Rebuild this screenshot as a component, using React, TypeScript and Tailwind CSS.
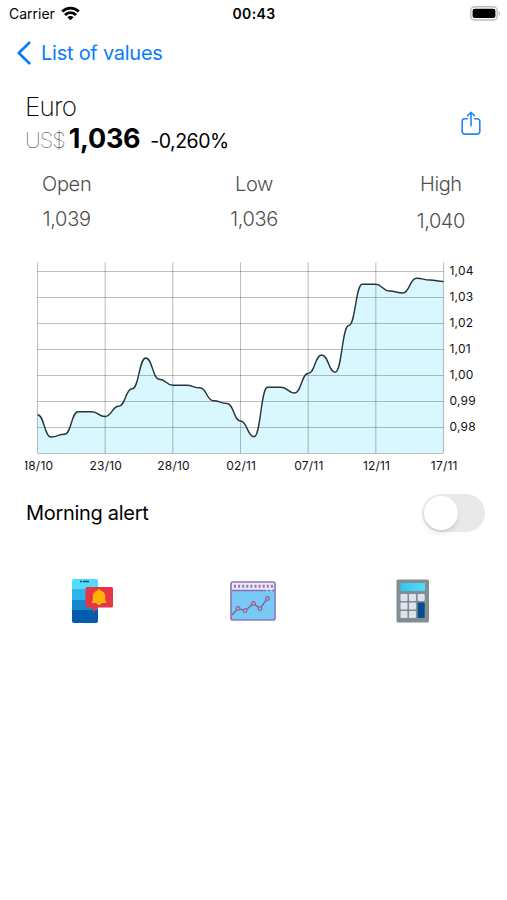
import React, { useState } from "react";

const chartWidth = 460;
const chartHeight = 216;
const plot = { left: 12.5, right: 418.5, top: 4.5, bottom: 195 };

// vertical position of each daily rate, 18/10 to 17/11
const points = [
  156.7, 179, 176.3, 153.7, 153.7, 158.5, 148.3, 130.8, 100, 121.3,
  127.3, 127.3, 129.8, 142.8, 145.5, 163, 178.8, 129.3, 129.3, 135,
  115.5, 97, 114.2, 67.5, 26.3, 26.3, 33, 35, 20.2, 22, 23.5,
];

const rates = ["1,04", "1,03", "1,02", "1,01", "1,00", "0,99", "0,98"];
const dates = ["18/10", "23/10", "28/10", "02/11", "07/11", "12/11", "17/11"];

const statBase = "flex flex-col items-center text-[20px] leading-7 font-light text-[#505050]";

const stats = [
  { label: "Open", value: "1,039", className: `${statBase} gap-[7px] tracking-[-0.3px]` },
  { label: "Low", value: "1,036", className: `${statBase} gap-[7px] tracking-[-0.4px]` },
  { label: "High", value: "1,040", className: `${statBase} gap-[9px] tracking-[-0.4px]` },
];

const step = (plot.right - plot.left) / (points.length - 1);

function buildLine() {
  let d = `M${plot.left} ${points[0]}`;
  for (let i = 1; i < points.length; i++) {
    const x = plot.left + i * step;
    const mid = x - step / 2;
    d += ` C${mid} ${points[i - 1]} ${mid} ${points[i]} ${x} ${points[i]}`;
  }
  return d;
}

function StatusBar() {
  return (
    <div className="grid grid-cols-3 items-center h-[27px] pl-[9px] pr-[6px] text-black">
      <div className="flex items-center gap-[6px]">
        <span className="text-[14px]">Carrier</span>
        <svg width="19" height="15" viewBox="0 0 19 15">
          <g fill="none" stroke="#000" strokeWidth="2.8">
            <path d="M1.2 5.5a11.8 11.8 0 0 1 16.6 0" />
            <path d="M4 8.9a7.8 7.8 0 0 1 11 0" />
          </g>
          <path d="M6.4 11.3a4.4 4.4 0 0 1 6.2 0l-3.1 3z" />
        </svg>
      </div>
      <span className="-ml-[2px] text-center text-[14px] font-semibold tracking-[0.4px]">00:43</span>
      <svg className="justify-self-end" width="31" height="15" viewBox="0 0 31 15">
        <rect x="0.8" y="0.8" width="26.4" height="13.2" rx="3.8" fill="#fff" stroke="#bcbcbc" strokeWidth="1.4" />
        <rect x="2.6" y="2.7" width="22.8" height="9.4" rx="2" />
        <path d="M28.6 5.2c2 .8 2 3.8 0 4.6z" fill="#bcbcbc" />
      </svg>
    </div>
  );
}

function ShareIcon() {
  return (
    <svg width="20" height="25" viewBox="0 0 20 25" fill="none" stroke="#2086f0" strokeWidth="1.6" strokeLinecap="round" strokeLinejoin="round">
      <path d="M6.3 7.7H3.8a2.6 2.6 0 0 0-2.6 2.6v10.2a2.6 2.6 0 0 0 2.6 2.6h12.4a2.6 2.6 0 0 0 2.6-2.6V10.3a2.6 2.6 0 0 0-2.6-2.6h-2.5" />
      <path d="M10 14.8V1.4M6.6 4.7 10 1.3l3.4 3.4" />
    </svg>
  );
}

function RateChart() {
  const line = buildLine();
  return (
    <svg className="overflow-hidden" width={chartWidth} height={chartHeight} viewBox={`0 0 ${chartWidth} ${chartHeight}`}>
      <path d={`${line} V${plot.bottom} H${plot.left} Z`} fill="#d9f7ff" />
      <g stroke="#000" strokeOpacity="0.25" strokeWidth="1.1">
        {rates.map((rate, i) => (
          <path key={rate} d={`M${plot.left} ${13.5 + i * 26}H${plot.right}`} />
        ))}
        {dates.map((date, i) => (
          <path key={date} d={`M${plot.left + i * step * 5} ${plot.top}V${plot.bottom}`} />
        ))}
        <path d={`M${plot.left} ${plot.bottom + 0.5}H${plot.right}`} />
      </g>
      <path d={line} fill="none" stroke="#26363a" strokeWidth="1.4" />
      <g className="tracking-[0.2px]" fill="#111" fontSize="12" fontWeight="400">
        {rates.map((rate, i) => (
          <text key={rate} x="424.5" y={17.3 + i * 26}>{rate}</text>
        ))}
        {dates.map((date, i) => (
          <text key={date} x={plot.left + i * step * 5 + 0.7} y="211.5" textAnchor="middle">{date}</text>
        ))}
      </g>
    </svg>
  );
}

function PhoneAlertIcon() {
  return (
    <svg width="43" height="46" viewBox="0 0 43 46">
      <path d="M3 1h22a2 2 0 0 1 2 2v8H1V3a2 2 0 0 1 2-2z" fill="#50dcfa" />
      <path d="M1 11h26v12H1z" fill="#2bb5ec" />
      <path d="M1 22h26v10H1z" fill="#1688d2" />
      <path d="M1 32h26v11a2 2 0 0 1-2 2H3a2 2 0 0 1-2-2z" fill="#045cac" />
      <path d="M9 3.5h2M12 3.5h6" stroke="#164b78" strokeWidth="1.6" />
      <path d="M16 9h24.5a1.5 1.5 0 0 1 1.5 1.5V28a1.5 1.5 0 0 1-1.5 1.5H27L22 35v-5.5h-6a1.5 1.5 0 0 1-1.5-1.5V10.5A1.5 1.5 0 0 1 16 9z" fill="#e73545" />
      <path d="M28 11c1 0 1.6.8 1.6 1.5 3.4.9 4.6 3 4.6 6V22l1.3 3h-15l1.3-3v-3.5c0-3 1.2-5.1 4.6-6 0-.7.6-1.5 1.6-1.5z" fill="#ffb000" />
      <path d="M25.3 25h5.4a2.7 1.8 0 0 1-5.4 0z" fill="#ffc51c" />
    </svg>
  );
}

function StatisticsIcon() {
  return (
    <svg width="46" height="40" viewBox="0 0 46 40">
      <rect x="1" y="1" width="44" height="38" rx="2" fill="#78c9f4" />
      <path d="M1 1h44v8H1z" fill="#f0e5fb" />
      <path d="M4 5.3h39" stroke="#8e7bbb" strokeWidth="3" strokeDasharray="2 2.1" />
      <path d="M2 9.5h34M38 9.5h2M42 9.5h2" stroke="#8370b2" strokeWidth="1.3" />
      <rect x="1" y="1" width="44" height="38" rx="2" fill="none" stroke="#8e7bb6" strokeWidth="1.7" />
      <path d="m2 34 6-6.5 7 2.2 8.5-7.2 6.500 5 7.500-10" fill="none" stroke="#80649f" strokeWidth="1.4" />
      <g fill="#d9a0c5" stroke="#80649f" strokeWidth="1.2">
        <circle cx="8" cy="27.5" r="1.8" />
        <circle cx="15" cy="29.7" r="1.8" />
        <circle cx="23.5" cy="22.5" r="1.8" />
        <circle cx="30" cy="27.5" r="1.8" />
        <circle cx="37.5" cy="17.5" r="1.8" />
      </g>
    </svg>
  );
}

function CalculatorIcon() {
  return (
    <svg width="34" height="44" viewBox="0 0 34 44">
      <defs>
        <linearGradient id="screen">
          <stop offset="0" stopColor="#32c4f1" />
          <stop offset="1" stopColor="#54dcf4" />
        </linearGradient>
      </defs>
      <rect x="0.5" y="0.5" width="32.5" height="43" rx="1.5" fill="#858d94" />
      <rect x="4.5" y="4" width="24.5" height="8" fill="url(#screen)" />
      <g fill="#dfe3ed">
        <rect x="4.5" y="15" width="7" height="7" rx="1" />
        <rect x="13" y="15" width="7" height="7" rx="1" />
        <rect x="21.7" y="15" width="7" height="7" rx="1" />
        <rect x="4.5" y="23.5" width="7" height="7" rx="1" />
        <rect x="13" y="23.5" width="7" height="7" rx="1" />
        <rect x="4.5" y="32" width="7" height="7" rx="1" />
        <rect x="13" y="32" width="7" height="7" rx="1" />
      </g>
      <rect x="21.7" y="23.5" width="7" height="15.5" rx="1" fill="#064e91" />
    </svg>
  );
}

export default function App() {
  const [alertOn, setAlertOn] = useState(false);

  return (
    <div className="min-h-[900px] w-full bg-white font-['Inter',sans-serif] text-black">
      <StatusBar />
      <button className="flex items-center gap-[10px] h-[51px] pl-[17px] text-[#087df5]">
        <svg width="14" height="24" viewBox="0 0 14 24" fill="none" stroke="currentColor" strokeWidth="2.7" strokeLinecap="round" strokeLinejoin="round">
          <path d="M12.3 1.8 1.8 12l10.5 10.2" />
        </svg>
        <span className="text-[20px] tracking-[-0.25px]">List of values</span>
      </button>

      <div className="flex items-center justify-between pl-[25px] pr-[26px] pt-[13px]">
        <div>
          <h1 className="text-[26px] leading-8 font-extralight tracking-[-0.8px]">Euro</h1>
          <div className="flex items-baseline leading-8">
            <span className="text-[22px] font-thin tracking-[-1px] text-[#222]">US$</span>
            <span className="ml-[4px] text-[27px] font-bold tracking-[-0.3px]">1,036</span>
            <span className="ml-[10px] text-[19.5px] tracking-[-0.5px]">-0,260%</span>
          </div>
        </div>
        <button aria-label="Share" className="mb-[2px]">
          <ShareIcon />
        </button>
      </div>

      <div className="flex items-start justify-between px-[42px] mt-[13px]">
        {stats.map(stat => (
          <div key={stat.label} className={stat.className}>
            <span>{stat.label}</span>
            <span>{stat.value}</span>
          </div>
        ))}
      </div>

      <div className="pl-[25px] mt-[23px]">
        <RateChart />
      </div>

      <div className="flex items-center justify-between pl-[26px] pr-[22px] mt-5">
        <span className="text-[20px] tracking-[-0.3px]">Morning alert</span>
        <button
          role="switch"
          aria-label="Morning alert"
          aria-checked={alertOn}
          onClick={() => setAlertOn(!alertOn)}
          className={`flex w-[63px] h-[38px] p-[2px] rounded-full ${alertOn ? "justify-end bg-green-500" : "bg-[#e9e9eb]"}`}
        >
          <span className="size-[34px] rounded-full bg-white shadow-md" />
        </button>
      </div>

      <div className="flex items-center pl-[71px] mt-[46px]">
        <PhoneAlertIcon />
        <div className="ml-[116px]">
          <StatisticsIcon />
        </div>
        <div className="ml-[120px]">
          <CalculatorIcon />
        </div>
      </div>
    </div>
  );
}
